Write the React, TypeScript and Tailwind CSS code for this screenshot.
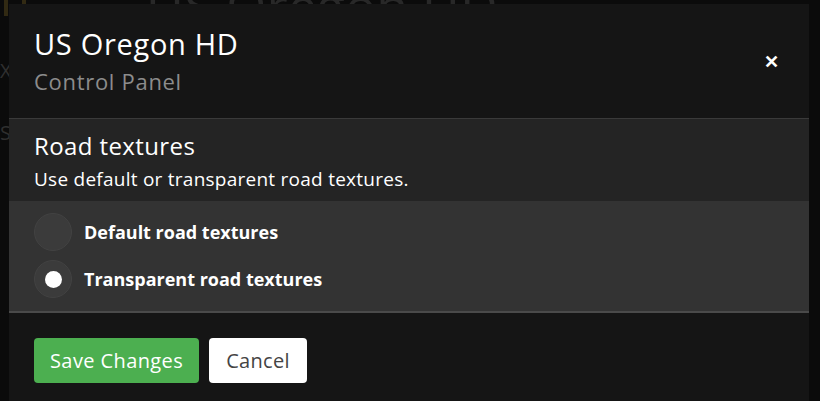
import React, { useState } from "react";

const options = [
  { id: "default", label: "Default road textures" },
  { id: "transparent", label: "Transparent road textures" },
];

const App = () => {
  const [choice, setChoice] = useState("transparent");

  return (
    <div
      className="relative h-[401px] w-[820px] overflow-hidden bg-[#101010]"
      style={{ fontFamily: "'Open Sans', 'Noto Sans', sans-serif" }}
    >
      {/* page behind the modal */}
      <div className="h-[16px] overflow-hidden">
        <div className="flex items-center gap-6 px-1 -mt-[34px] opacity-30">
          <div className="h-[44px] w-[22px] rounded-b-md border-4 border-[#c8a43a]"></div>
          <span className="ml-[96px] text-[52px] text-[#9a9a9a]">US Oregon HD</span>
        </div>
      </div>
      <div className="flex flex-col gap-8 pt-[40px] text-[20px] text-[#444]">
        <span>X</span>
        <span>S</span>
      </div>

      {/* overlay + modal */}
      <div className="absolute inset-0 bg-black/30">
        <div className="ml-[9px] mt-[4px] w-[800px] bg-[#151515] text-white">
          <div className="flex items-center justify-between pl-[25px] pr-[30px] pt-[22px] pb-[23px]">
            <div>
              <h2 className="text-[29px] leading-[36px] tracking-[0.7px]">US Oregon HD</h2>
              <p className="mt-[5px] text-[22px] leading-[28px] tracking-[0.7px] text-[#8c8c8c]">Control Panel</p>
            </div>
            <button className="text-[18px] font-black leading-none text-white">✕</button>
          </div>

          <div className="border-t border-[#3a3a3a] bg-[#242424] px-[25px] pt-[12px] pb-[10px]">
            <h3 className="text-[24px] leading-[30px] tracking-[0.4px]">Road textures</h3>
            <p className="mt-[6px] text-[19px] leading-[24px] tracking-[0.25px]">Use default or transparent road textures.</p>
          </div>

          <div className="flex flex-col gap-[9px] border-b-2 border-[#4a4a4a] bg-[#333333] px-[25px] pt-[12px] pb-[13px]">
            {options.map((o) => (
              <label
                key={o.id}
                className="flex cursor-pointer items-center gap-[12px]"
                onClick={() => setChoice(o.id)}
              >
                <span className="flex h-[38px] w-[38px] items-center justify-center rounded-full border border-[#424242] bg-[#3b3b3b]">
                  {choice === o.id && <span className="h-[17px] w-[17px] rounded-full bg-white"></span>}
                </span>
                <span className="text-[18px] font-bold">{o.label}</span>
              </label>
            ))}
          </div>

          <div className="flex gap-[10px] px-[25px] pt-[25px] pb-[30px]">
            <button className="h-[45px] rounded-[4px] bg-[#4caf50] px-[16px] text-[20px] tracking-[0.4px] text-white">
              Save Changes
            </button>
            <button className="h-[45px] rounded-[4px] bg-white px-[17px] text-[20px] tracking-[0.3px] text-[#444]">
              Cancel
            </button>
          </div>
        </div>
      </div>
    </div>
  );
};

export default App;
